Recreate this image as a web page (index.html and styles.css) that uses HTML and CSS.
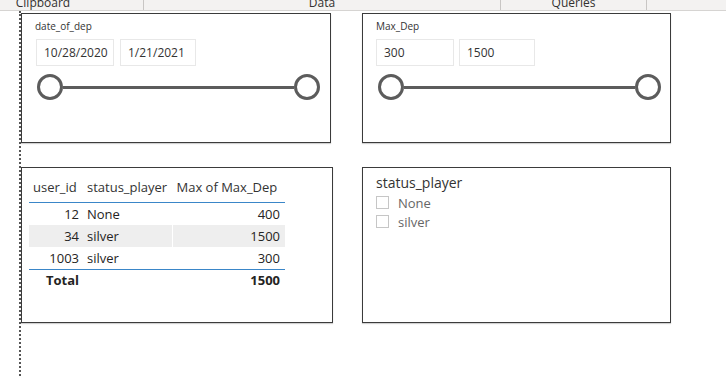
FILE: index.html
```html
<!DOCTYPE html>
<html lang="en">
<head>
    <meta charset="UTF-8">
    <title>Report</title>
    <link rel="stylesheet" href="styles.css">
</head>
<body>
    <div class="ribbon">
        <div class="ribbon-group group-clipboard"><span>Clipboard</span></div>
        <div class="ribbon-group group-data"><span>Data</span></div>
        <div class="ribbon-group group-queries"><span>Queries</span></div>
        <div class="ribbon-group group-more"></div>
    </div>

    <div class="canvas">
        <!-- date slicer -->
        <div class="visual slicer slicer-date">
            <div class="slicer-label">date_of_dep</div>
            <div class="range-inputs">
                <div class="range-box box-from">10/28/2020</div>
                <div class="range-box box-to">1/21/2021</div>
            </div>
            <div class="range-slider">
                <span class="handle"></span>
                <span class="track"></span>
                <span class="handle"></span>
            </div>
        </div>

        <!-- max dep slicer -->
        <div class="visual slicer slicer-dep">
            <div class="slicer-label">Max_Dep</div>
            <div class="range-inputs">
                <div class="range-box box-from">300</div>
                <div class="range-box box-to">1500</div>
            </div>
            <div class="range-slider">
                <span class="handle"></span>
                <span class="track"></span>
                <span class="handle"></span>
            </div>
        </div>

        <!-- table -->
        <div class="visual table-visual">
            <table class="data-table">
                <thead>
                    <tr>
                        <th class="col-id">user_id</th>
                        <th class="col-status">status_player</th>
                        <th class="col-max">Max of Max_Dep</th>
                    </tr>
                </thead>
                <tbody>
                    <tr>
                        <td class="col-id">12</td>
                        <td class="col-status">None</td>
                        <td class="col-max">400</td>
                    </tr>
                    <tr class="shaded">
                        <td class="col-id">34</td>
                        <td class="col-status">silver</td>
                        <td class="col-max">1500</td>
                    </tr>
                    <tr class="last">
                        <td class="col-id">1003</td>
                        <td class="col-status">silver</td>
                        <td class="col-max">300</td>
                    </tr>
                    <tr class="total">
                        <td class="col-id total-label">Total</td>
                        <td class="col-status"></td>
                        <td class="col-max">1500</td>
                    </tr>
                </tbody>
            </table>
        </div>

        <!-- list slicer -->
        <div class="visual list-slicer">
            <div class="list-title">status_player</div>
            <label class="list-item"><span class="check"></span>None</label>
            <label class="list-item"><span class="check"></span>silver</label>
        </div>
    </div>
</body>
</html>
```

FILE: styles.css
```css
body {
    margin: 0;
    font-family: 'Open Sans', 'Liberation Sans', sans-serif;
    color: #252423;
    background-color: #ffffff;
    overflow: hidden;
}
.ribbon {
    display: flex;
    height: 10px;
    overflow: hidden;
    background-color: #f3f2f1;
    border-bottom: 1px solid #d6d4d2;
}
.ribbon-group {
    flex: none;
    box-sizing: border-box;
    border-right: 1px solid #c8c6c4;
    text-align: center;
    font-family: 'Open Sans', sans-serif;
    font-size: 12px;
    line-height: 12px;
    color: #323130;
}
.ribbon-group span {
    display: block;
    margin-top: -3px;
}
.group-clipboard {
    margin-left: -57px;
    width: 201px;
}
.group-data {
    width: 357px;
}
.group-queries {
    width: 146px;
}
.group-more {
    border-right: none;
    flex: 1;
}
.canvas {
    margin-left: 19px;
    border-left: 2px dotted #555;
    height: 365px;
    padding-top: 2px;
    box-sizing: border-box;
    display: grid;
    grid-template-columns: 341px 309px;
    grid-template-rows: 130px 156px;
    row-gap: 24px;
    align-items: start;
}
.visual {
    box-sizing: border-box;
    border: 1px solid #3b3b3b;
    box-shadow: 0 1px 1px rgba(0, 0, 0, 0.18);
    background-color: #fff;
    height: 100%;
}
.slicer {
    padding: 5px 12px 0 13px;
}
.slicer-date {
    width: 310px;
}
.slicer-dep {
    width: 309px;
}
.slicer-label {
    font-size: 10px;
    line-height: 14px;
    color: #333;
}
.range-inputs {
    display: flex;
    gap: 6px;
    margin-top: 6px;
    margin-left: 1px;
}
.slicer-dep .range-inputs {
    margin-left: 0;
    gap: 5px;
}
.range-box {
    box-sizing: border-box;
    height: 27px;
    border: 1px solid #e8e8e8;
    padding-left: 7px;
    font-size: 12px;
    line-height: 25px;
    color: #333;
}
.box-from {
    width: 78px;
}
.box-to {
    width: 76px;
}
.range-slider {
    display: flex;
    align-items: center;
    width: 283px;
    height: 26px;
    margin-top: 8px;
    margin-left: 2px;
}
.handle {
    flex: none;
    box-sizing: border-box;
    width: 26px;
    height: 26px;
    border: 3px solid #5c5c5c;
    border-radius: 50%;
    background-color: #fff;
}
.track {
    flex: 1;
    height: 3px;
    background-color: #5c5c5c;
}
.table-visual {
    width: 312px;
    padding: 7px 0 0 7px;
}
.data-table {
    border-collapse: collapse;
    width: 256px;
    font-size: 13px;
}
.data-table th {
    font-weight: 400;
    color: #333;
    line-height: 18px;
    padding: 3px 4px 6px;
    text-align: left;
    border-bottom: 1px solid #3a86c8;
    white-space: nowrap;
}
.data-table td {
    line-height: 18px;
    padding: 2px 4px;
    white-space: nowrap;
}
.col-id {
    width: 46px;
    text-align: right;
}
.data-table td.col-id {
    text-align: right;
}
.col-status {
    width: 81px;
}
.data-table td.col-max {
    text-align: right;
    padding-right: 5px;
    border-left: 1px solid #fff;
}
.shaded td {
    background-color: #eeeeee;
}
.last td {
    border-bottom: 1px solid #3a86c8;
}
.total td {
    font-weight: 700;
    padding-top: 1px;
}
.data-table td.total-label {
    text-align: right;
}
.list-slicer {
    width: 309px;
    padding: 4px 13px 0;
}
.list-title {
    font-size: 14px;
    line-height: 21px;
    color: #333;
}
.list-item {
    display: flex;
    align-items: center;
    height: 19px;
    font-size: 13px;
    color: #666;
}
.check {
    box-sizing: border-box;
    width: 13px;
    height: 13px;
    border: 1px solid #c6c6c6;
    margin-right: 9px;
}
```
